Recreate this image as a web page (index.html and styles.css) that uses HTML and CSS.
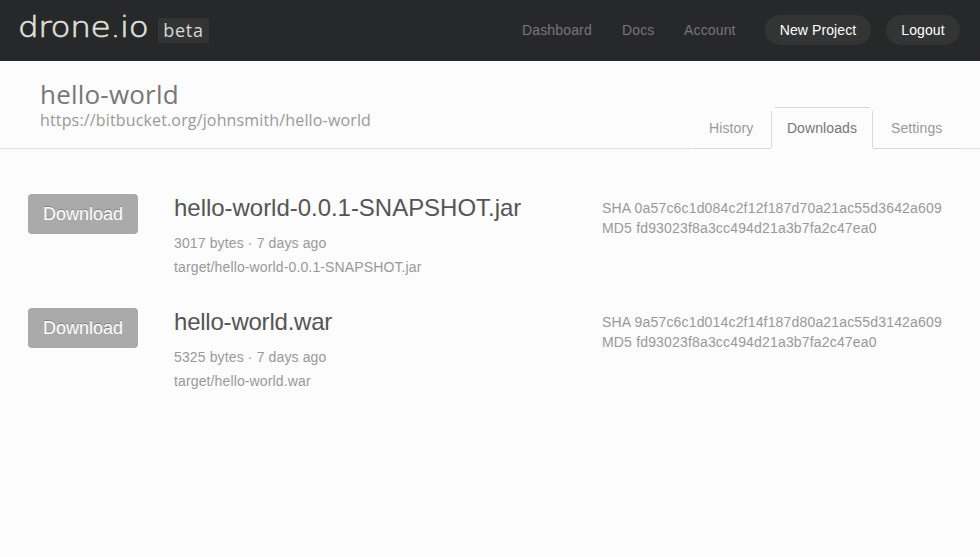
FILE: index.html
```html
<!DOCTYPE html>
<html lang="en">
<head>
<meta charset="utf-8">
<title>drone.io</title>
<link rel="stylesheet" href="styles.css">
</head>
<body>
<header class="topbar">
  <a class="brand"><span class="logo">drone.io</span><span class="beta">beta</span></a>
  <nav class="nav">
    <a class="dashboard">Dashboard</a>
    <a class="docs">Docs</a>
    <a class="account">Account</a>
    <a class="pill new-project">New Project</a>
    <a class="pill logout">Logout</a>
  </nav>
</header>
<section class="project">
  <div class="title">
    <h1>hello-world</h1>
    <p>https://bitbucket.org/johnsmith/hello-world</p>
  </div>
  <nav class="tabs">
    <a class="tab history">History</a>
    <a class="tab active">Downloads</a>
    <a class="tab settings">Settings</a>
  </nav>
</section>
<main class="downloads">
  <article class="item">
    <a class="button">Download</a>
    <div class="file">
      <h2 class="jar">hello-world-0.0.1-SNAPSHOT.jar</h2>
      <p>3017 bytes · 7 days ago</p>
      <p>target/hello-world-0.0.1-SNAPSHOT.jar</p>
    </div>
    <div class="hashes">
      <p>SHA 0a57c6c1d084c2f12f187d70a21ac55d3642a609</p>
      <p>MD5 fd93023f8a3cc494d21a3b7fa2c47ea0</p>
    </div>
  </article>
  <article class="item">
    <a class="button">Download</a>
    <div class="file">
      <h2>hello-world.war</h2>
      <p>5325 bytes · 7 days ago</p>
      <p>target/hello-world.war</p>
    </div>
    <div class="hashes">
      <p>SHA 9a57c6c1d014c2f14f187d80a21ac55d3142a609</p>
      <p>MD5 fd93023f8a3cc494d21a3b7fa2c47ea0</p>
    </div>
  </article>
</main>
</body>
</html>
```
FILE: styles.css
```css
* { box-sizing: border-box; }
body {
  margin: 0;
  background: #fcfcfc;
  color: #999;
  font: 14px/20px "Liberation Sans", Arial, sans-serif;
}
h1, h2, p { margin: 0; font-weight: normal; }

.topbar {
  display: flex;
  justify-content: space-between;
  height: 61px;
  padding: 0 20px;
  background: #27282a;
}
.brand { display: flex; align-items: flex-start; }
.logo {
  width: 138px;
  padding-top: 12px;
  font: 200 28px/32px "DejaVu Sans Light", "DejaVu Sans", sans-serif;
  letter-spacing: -0.4px;
  color: #e0e0dc;
  white-space: nowrap;
  transform: translateX(-2px) scaleX(1.17);
  transform-origin: left;
  -webkit-text-stroke: 0.6px #e0e0dc;
}
.beta {
  width: 51px;
  height: 25px;
  margin-top: 18px;
  border-radius: 3px;
  background: #333534;
  color: #d8d8d8;
  font: 18px/25px "Open Sans", sans-serif;
  letter-spacing: 0.8px;
  text-align: center;
}
.nav { display: flex; align-items: flex-start; padding-top: 15px; line-height: 30px; color: #777; letter-spacing: 0.15px; }
.dashboard { width: 100px; }
.docs { width: 62px; }
.account { width: 81px; }
.pill { height: 30px; border-radius: 15px; background: #333534; color: #fff; text-align: center; letter-spacing: 0.1px; }
.new-project { width: 106px; }
.logout { width: 74px; margin-left: 15px; }

.project {
  display: flex;
  justify-content: space-between;
  align-items: flex-end;
  height: 88px;
  padding: 0 20px 0 40px;
  border-bottom: 1px solid #d4e9ef;
}
.title { align-self: flex-start; padding-top: 16px; font-family: "Open Sans", sans-serif; }
.title h1 { font-size: 26px; line-height: 35px; letter-spacing: 0.2px; color: #777; }
.title p { font-size: 16px; line-height: 16px; letter-spacing: 0.15px; color: #999; }
.tabs { display: flex; height: 42px; margin-bottom: -1px; }
.tab { padding-top: 11px; border-bottom: 1px solid #d9d9d9; letter-spacing: 0.1px; }
.history { width: 78px; padding-left: 16px; }
.settings { width: 87px; padding-left: 18px; }
.active {
  position: relative;
  width: 102px;
  border-bottom-color: #fcfcfc;
  color: #777;
  text-align: center;
}
.active::before {
  content: "";
  position: absolute;
  left: 4px;
  right: 3px;
  top: 0;
  border-top: 1px solid #d9d9d9;
}
.active::after {
  content: "";
  position: absolute;
  inset: 4px 0 0;
  border: solid #d9d9d9;
  border-width: 0 1px;
}

.downloads { padding: 45px 28px 0; }
.item { display: flex; align-items: flex-start; height: 114px; }
.button {
  width: 110px;
  height: 40px;
  border-radius: 4px;
  background: #aaa;
  color: #fff;
  font-size: 18px;
  line-height: 40px;
  text-align: center;
  text-shadow: 0 -1px 0 rgba(0, 0, 0, 0.25);
}
.file { width: 428px; margin-left: 36px; }
.file h2 { margin-bottom: 10px; font-size: 24px; line-height: 27px; letter-spacing: -0.22px; color: #555; }
.file h2.jar { letter-spacing: -0.03px; }
.file p { line-height: 24px; letter-spacing: 0.13px; }
.hashes { padding-top: 4px; letter-spacing: 0.17px; white-space: nowrap; }
```
